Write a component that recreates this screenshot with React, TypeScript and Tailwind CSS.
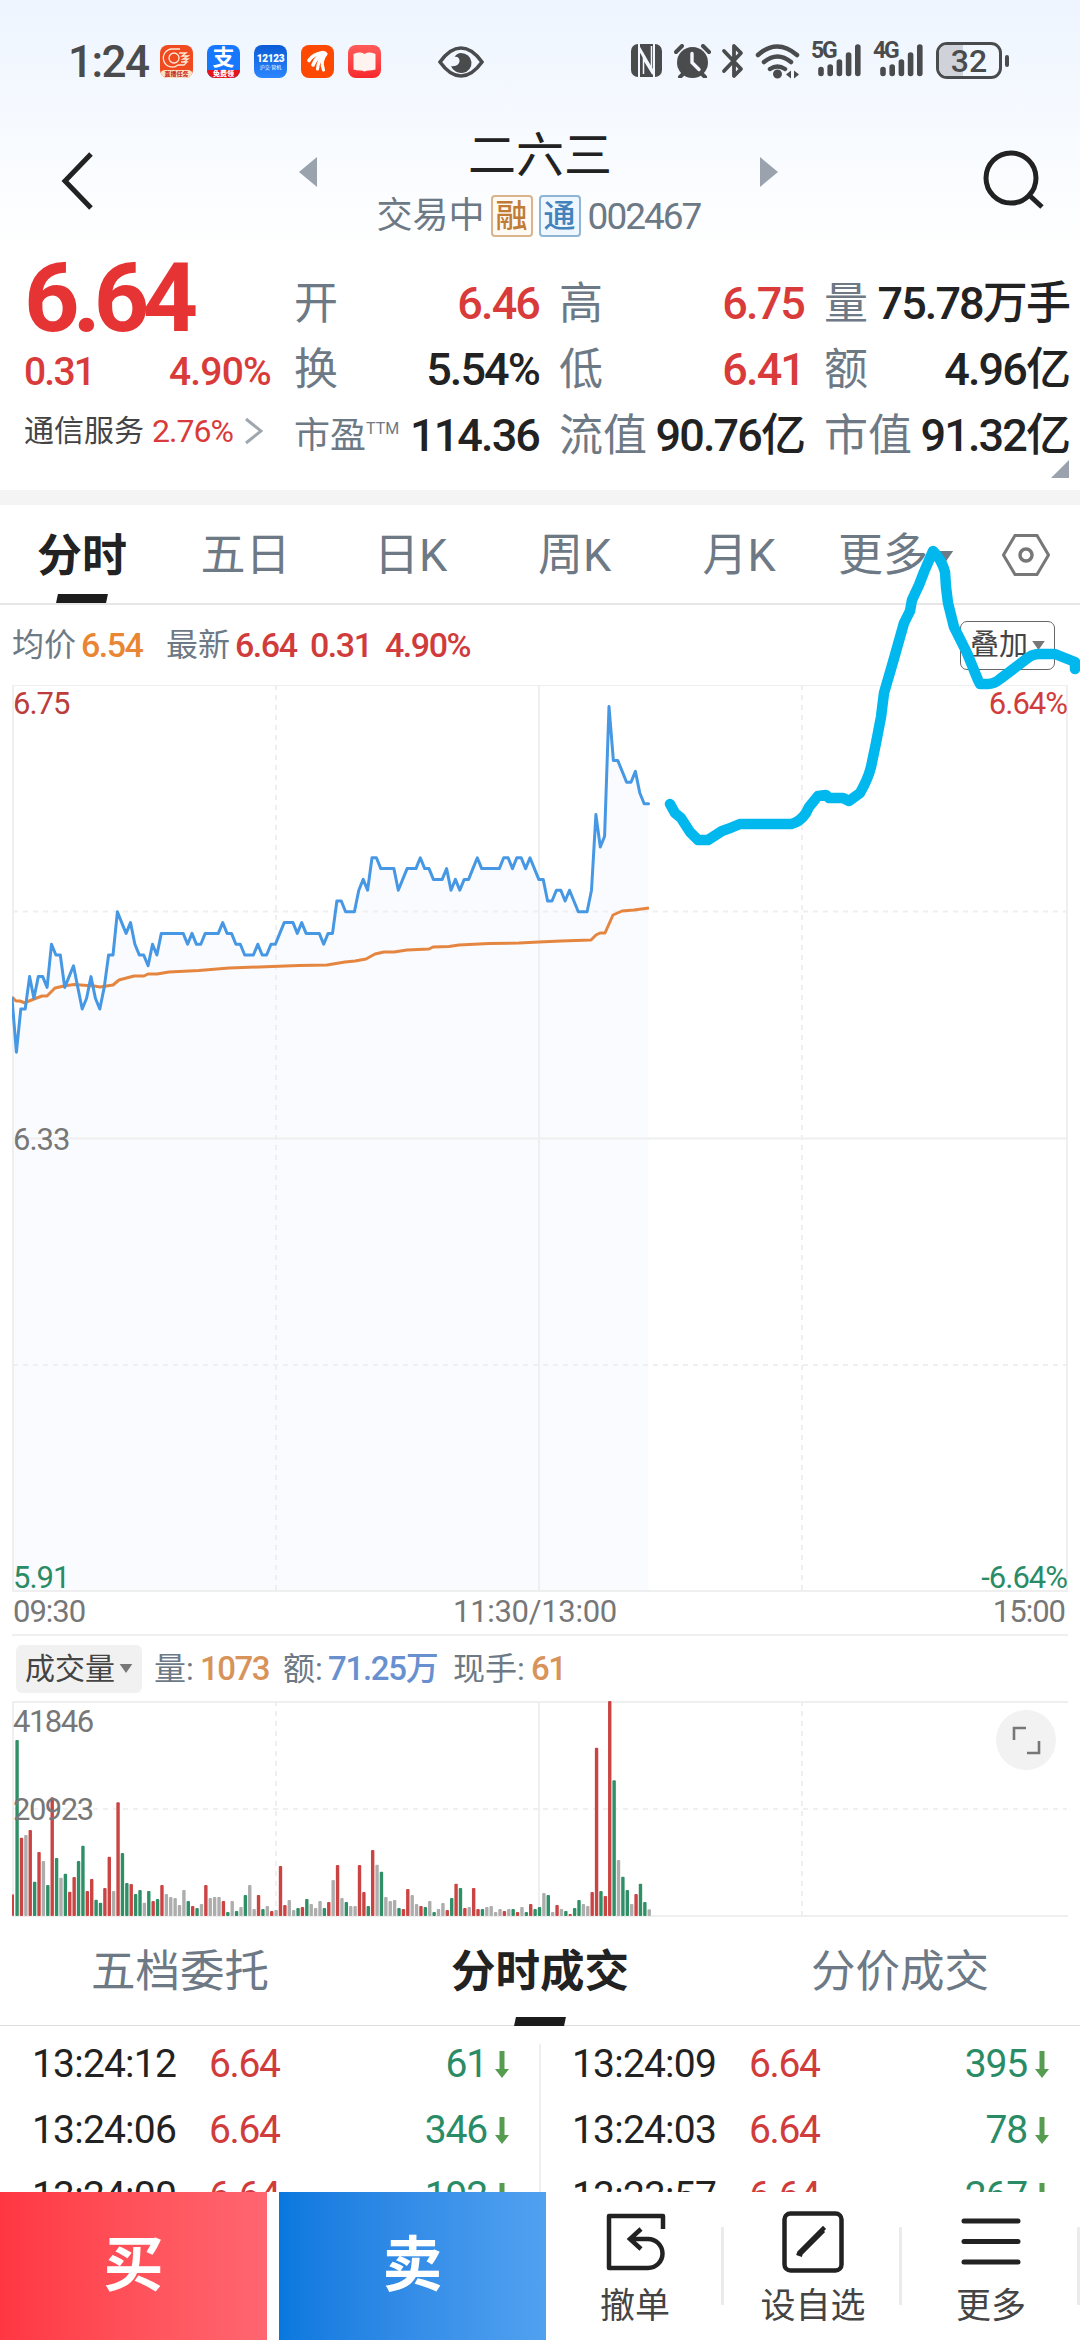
import React from "react";

const TOP_PRICE = 6.75;
const STEP = 4.39;

// one price per minute since 09:30, in cents
const prices = [
    646, 641, 645, 645, 648, 646, 648, 648, 647, 651, 650, 650, 647, 648, 649, 647, 645, 646, 648, 646,
    645, 647, 650, 650, 654, 653, 652, 653, 651, 650, 650, 649, 651, 650, 652, 652, 652, 652, 652, 652,
    651, 652, 651, 651, 652, 652, 652, 652, 653, 652, 652, 651, 651, 650, 650, 650, 651, 650, 650, 651,
    651, 652, 653, 653, 653, 652, 653, 652, 652, 652, 652, 651, 652, 652, 655, 655, 654, 654, 654, 656,
    657, 656, 659, 659, 658, 658, 658, 658, 656, 657, 658, 658, 658, 659, 658, 658, 657, 657, 657, 658,
    656, 657, 656, 657, 657, 658, 659, 658, 658, 658, 658, 658, 659, 659, 658, 659, 659, 658, 659, 658,
    657, 657, 655, 655, 656, 656, 655, 656, 655, 654, 654, 654, 656, 663, 660, 661, 673, 668, 668, 667,
    666, 666, 667, 665, 664, 664,
];

// r = up, g = down, n = flat; the number is the bar height in thirds of a pixel
const volumes =
    "r65 g528 r235 n243 r258 g103 r192 n165 g93 r356 g174 n115 g127 r73 r117 g165 g211 r75 r111 g49 " +
    "g40 r84 r178 n75 r341 g189 g99 r96 g66 g78 n40 g75 r45 g51 r93 n66 n57 n54 n33 n78 " +
    "g45 r30 g24 n36 r93 n54 n57 n57 r45 g12 n45 g15 n27 g63 n93 n21 r63 g21 n30 r15 " +
    "n18 r150 r33 n48 n18 g24 r27 g51 n36 n24 n45 g24 r42 n108 r153 n54 g42 n30 n30 r153 " +
    "r72 g30 r198 n154 g133 n57 n45 n48 g24 r21 r81 n63 n36 r30 g27 n45 g12 n21 n39 r18 " +
    "g54 r97 g84 r24 n27 r84 r21 g21 n27 n30 n12 n21 r15 n21 g21 r12 n27 g12 r36 g21 " +
    "g27 n69 g63 n12 r33 n21 g15 r6 g24 g48 n36 n30 r72 r505 g75 r60 r645 g407 n168 g118 " +
    "g78 n36 r66 g97 g42 n20";

const barColors: Record<string, string> = { r: "#cb4444", g: "#2f9067", n: "#adadad" };

const averageLine =
    "0,312 4,316 8,316 13,318 17,316 22,314 30,311 35,311 43,303 52,301 62,299.5 82,301 88,302 101,300 107,295 122,291 132,291 136,289 145,289 157,287 187,285.5 217,283 247,282 287,280.5 315,280 327,278 333,277 343,276 354,274 363,269 372,267 382,267 395,265 417,264 421,262 437,261.5 447,260 477,258.5 507,258 527,257 549,256 579,255 584,250 588,248 593,248 601,230 610,226 622,225 637,223";

const sketchLine =
    "M670 804L675 813L681 818L690 832L698 840L708 840L722 831Q731 828 740 824L791 824Q800 822 806 813L809 807L818 796L826 795L829 798L843 798L849 801L860 793Q868 779 871 767L876 743L881 717L884 693L893 662L904 623L910 611L912 600L919 585L924 572L933 551Q942 560 945 572L946 587L948 603L954 627L967 653L978 680L980 684L988 684Q994 684 1000 679L1012 670L1029 657Q1034 654 1039 654L1055 654L1075 662L1075 669";

const priceY = (p: number) => (TOP_PRICE - p / 100) * 1080;

const Caret = ({ className }: { className?: string }) => (
    <svg viewBox="0 0 14 10" className={className} fill="currentColor">
        <path d="M0 0h14L7 10z" />
    </svg>
);

const SignalBars = ({ label }: { label: string }) => (
    <div className="relative h-[36px] w-[51px]">
        <span className="absolute left-0 top-[-1px] text-[23px] font-bold leading-[18px] tracking-[-2.200px]">{label}</span>
        <svg viewBox="0 0 51 36" className="h-full w-full" stroke="currentColor" strokeWidth="5.6" strokeLinecap="round">
            <path d="M10 26.500v4M19.200 24v6.500M28.400 19v11.500M37.600 12v18.500M46.800 4v26.500" />
        </svg>
    </div>
);

const StatusBar = () => (
    <div className="relative flex h-[92px] items-start pt-[42px] pl-[68px] text-[#4a4b4d]">
        <span className="w-[92px] text-[44px] font-medium leading-[40px] tracking-[-1.500px]">1:24</span>
        <div className="flex gap-[14px] pt-[3px]">
            <div className="relative h-[33px] w-[33px] overflow-hidden rounded-[8px] bg-[#f04a20]">
                <svg viewBox="0 0 33 33" fill="none" stroke="#ffe9d8" strokeWidth="1.3">
                    <circle cx="14" cy="13" r="5" />
                    <path d="M20 4h-8a9 9 0 1 0 6 16h6l3-3h-6M19 8h7l-4 3h6l-5 3h5l-4 3" />
                </svg>
                <div className="absolute inset-x-0 bottom-0 h-[8px] rounded-t-[5px] bg-[#fbe3c0] text-center text-[6px] font-black leading-[8px] text-[#c33]">直播任务</div>
            </div>
            <div className="relative h-[33px] w-[33px] overflow-hidden rounded-[8px] bg-[#1677ff] text-center text-[22px] font-bold leading-[25px] text-white">
                支
                <div className="absolute inset-x-0 bottom-0 h-[8px] bg-[#e5141c] text-[7px] font-black leading-[8px]">免费领</div>
            </div>
            <div className="flex h-[33px] w-[33px] flex-col items-center justify-center rounded-[8px] bg-linear-to-b from-[#0a5cd6] to-[#2b86ff] text-white">
                <span className="text-[10px] font-black leading-[11px] tracking-[-0.300px]">12123</span>
                <span className="text-[5px] leading-[6px]">沪交·管机</span>
            </div>
            <div className="h-[33px] w-[33px] rounded-[8px] bg-[#ff4800]">
                <svg viewBox="0 0 33 33" fill="none" stroke="white" strokeLinecap="round">
                    <path d="M8 15.500Q12 9 22 7.500" strokeWidth="3.600" />
                    <path d="M12 20Q15 12 23.500 8" strokeWidth="3.600" />
                    <path d="M16.500 24Q17 15 24.500 8.500M22.500 25Q19 16 25 9" strokeWidth="3.200" />
                </svg>
            </div>
            <div className="h-[33px] w-[33px] rounded-[8px] bg-linear-to-b from-[#ff5a5a] to-[#f8262c]">
                <svg viewBox="0 0 33 33" fill="#fff3f0">
                    <path d="M5.500 9q3-2 7-1.500 2.500 0 4 1.500 1.500-1.500 4-1.500 4-.5 7 1.500v15.500q-3 1-7 1-2 0-4 1-2-1-4-1-4 0-7-1z" />
                </svg>
            </div>
        </div>
        <svg viewBox="0 0 46 32" className="ml-[57px] mt-[4px] h-[32px] w-[46px]">
            <path d="M2 16Q12 2 23 2t21 14Q34 30 23 30T2 16z" fill="none" stroke="currentColor" strokeWidth="3.600" />
            <path d="M23 7a10.500 10 0 1 1-10 13c5 1 9-2 8.500-6-.5-3-3-3.500-5-3q2.500-4 6.500-4z" fill="currentColor" />
        </svg>
        <div className="absolute left-[631px] top-[42px] flex h-[37px] items-center">
            <svg viewBox="0 0 31 33" className="h-[33px] w-[31px]">
                <rect width="31" height="33" rx="7" fill="currentColor" />
                <path d="M8 0v33M23 0v33" stroke="#f3f7fe" strokeWidth="2" />
                <path d="M8 1l15 26v6L8 7z" fill="#f3f7fe" />
                <path d="M12 14v15l8 3z" fill="currentColor" />
                <path d="M12.500 30V15l8 13V2" fill="none" stroke="#f3f7fe" strokeWidth="1.500" />
            </svg>
            <svg viewBox="0 0 37 34" className="ml-[12px] h-[34px] w-[37px]">
                <circle cx="18.500" cy="18.500" r="15.500" fill="currentColor" />
                <path d="M2 8l6-6M35 8l-6-6M9 30l-3 3M28 30l3 3" stroke="currentColor" strokeWidth="4" strokeLinecap="round" />
                <path d="M18 9.500v9l7 7" fill="none" stroke="#f2f6fe" strokeWidth="3.400" strokeLinecap="round" />
            </svg>
            <svg viewBox="0 0 24 36" className="ml-[10px] h-[36px] w-[24px]" fill="none" stroke="currentColor" strokeWidth="3.800" strokeLinejoin="round" strokeLinecap="round">
                <path d="M3 8l17 18-7 7V3l7 7L3 28" />
            </svg>
            <svg viewBox="0 0 46 36" className="ml-[10px] h-[36px] w-[46px]" fill="none" stroke="currentColor" strokeWidth="4.500" strokeLinecap="round">
                <path d="M3 12Q22 -5 42 12M9 19q13.500-11 27 0M15 26q7.500-5 15 0" />
                <circle cx="22.500" cy="31" r="2.500" fill="currentColor" strokeWidth="4" />
                <path d="M31 31.500l5-4v8zM44 31.500l-5-4v8z" fill="currentColor" stroke="none" />
            </svg>
            <div className="ml-[10px]">
                <SignalBars label="5G" />
            </div>
            <div className="ml-[11px]">
                <SignalBars label="4G" />
            </div>
            <div className="relative ml-[12px] h-[37px] w-[66px] overflow-hidden rounded-[11px] border-[3px] border-[#4a4b4d] text-center">
                <div className="absolute inset-y-0 left-0 w-[24px] bg-[#cfd2d8]" />
                <span className="relative text-[32px] font-medium leading-[32px]">32</span>
            </div>
            <div className="ml-[3px] h-[12px] w-[4px] rounded-[2px] bg-[#4a4b4d]" />
        </div>
    </div>
);

const Header = () => (
    <div className="flex h-[158px] items-start justify-between pl-[60px] pr-[35px] text-[#222]">
        <svg viewBox="0 0 34 60" className="mt-[59px] h-[60px] w-[34px]" fill="none" stroke="currentColor" strokeWidth="5">
            <path d="M31 3L5 30l26 27" />
        </svg>
        <div className="flex w-[480px] justify-between">
            <svg viewBox="0 0 18 30" className="mt-[65px] h-[30px] w-[18px]" fill="#9aa3ad">
                <path d="M18 0v30L0 15z" />
            </svg>
            <div className="flex flex-col items-center">
                <h1 className="mt-[36px] pl-[3px] text-[48px] leading-[56px]">二六三</h1>
                <div className="mt-[11px] flex h-[42px] items-center text-[#6d7985]">
                    <span className="text-[36px] leading-[44px]">交易中</span>
                    <span className="ml-[6px] h-[42px] w-[42px] rounded-[4px] border-2 border-[#d9b48c] bg-[#fffaf3] text-center text-[32px] font-medium leading-[38px] text-[#c07c35]">融</span>
                    <span className="ml-[6px] h-[42px] w-[42px] rounded-[4px] border-2 border-[#8fb4d4] bg-[#eef7ff] text-center text-[32px] font-medium leading-[38px] text-[#4482bb]">通</span>
                    <span className="ml-[7px] text-[37px] leading-[43px] tracking-[-2px]">002467</span>
                </div>
            </div>
            <svg viewBox="0 0 18 30" className="mt-[65px] h-[30px] w-[18px]" fill="#9aa3ad">
                <path d="M0 0v30l18-15z" />
            </svg>
        </div>
        <svg viewBox="0 0 62 60" className="mt-[57px] h-[60px] w-[62px]" fill="none" stroke="currentColor" strokeWidth="5">
            <circle cx="28" cy="29" r="25" />
            <path d="M46 46l13 12" />
        </svg>
    </div>
);

interface QuoteItem {
    label: string;
    sup?: string;
    value: string;
    up?: boolean;
}

const quoteItems: QuoteItem[] = [
    { label: "开", value: "6.46", up: true },
    { label: "高", value: "6.75", up: true },
    { label: "量", value: "75.78万手" },
    { label: "换", value: "5.54%" },
    { label: "低", value: "6.41", up: true },
    { label: "额", value: "4.96亿" },
    { label: "市盈", sup: "TTM", value: "114.36" },
    { label: "流值", value: "90.76亿" },
    { label: "市值", value: "91.32亿" },
];

const Quote = () => (
    <div className="relative flex h-[240px] pl-[24px]">
        <div className="w-[270px] shrink-0 text-[#d93b3b]">
            <div className="h-[96px] text-[97px] font-bold leading-[96px] tracking-[-7px] text-[#e63434]">6.64</div>
            <div className="mt-[6px] flex w-[247px] justify-between text-[39px] font-medium leading-[40px]">
                <span className="tracking-[-1.800px]">0.31</span>
                <span className="tracking-[-0.800px]">4.90%</span>
            </div>
            <div className="mt-[19px] flex h-[40px] items-center text-[30px] leading-[40px]">
                <span className="text-[#444]">通信服务</span>
                <span className="ml-[8px] text-[32px] tracking-[-1px]">2.76%</span>
                <svg viewBox="0 0 18 28" className="ml-[12px] h-[28px] w-[18px]" fill="none" stroke="#a0a7ae" strokeWidth="3">
                    <path d="M1 2l15 12L1 26" />
                </svg>
            </div>
        </div>
        <div className="grid h-[219px] grid-cols-[245px_245px_245px] grid-rows-[66px_66px_66px] gap-x-[20px] pt-[21px]">
            {quoteItems.map((item) => (
                <div key={item.label} className="flex items-center justify-between whitespace-nowrap leading-[66px]">
                    <span className={item.sup ? "flex text-[36px] text-[#6d7985]" : "text-[44px] text-[#6d7985]"}>
                        {item.label}
                        {item.sup && <sup className="top-0 text-[16px] leading-[52px]">{item.sup}</sup>}
                    </span>
                    <span className={`text-[45px] font-medium tracking-[-1.900px] ${item.up ? "text-[#d93b3b]" : "text-[#222]"}`}>
                        {item.value}
                    </span>
                </div>
            ))}
        </div>
        <svg viewBox="0 0 18 18" className="absolute left-[1051px] top-[210px] h-[18px] w-[18px]" fill="#9aa3ad">
            <path d="M18 0v18H0z" />
        </svg>
    </div>
);

const PeriodTabs = () => (
    <div className="relative flex h-[100px] items-center border-b-2 border-[#e6e6e6] text-[45px] leading-[100px] text-[#6d7985]">
        <div className="relative h-full w-[164px] pt-[2px] text-center font-bold text-[#222]">
            分时
            <div className="absolute bottom-0 left-[57px] h-[9px] w-[50px] -skew-x-12 bg-[#1c1c1c]" />
        </div>
        <div className="w-[163px] pt-[4px] text-center">五日</div>
        <div className="w-[167px] pt-[4px] text-center">日K</div>
        <div className="w-[161px] pt-[4px] text-center">周K</div>
        <div className="w-[168px] pt-[4px] text-center">月K</div>
        <div className="flex w-[150px] items-center pl-[15px] pt-[4px]">
            更多
            <Caret className="ml-[9px] h-[11px] w-[17px]" />
        </div>
        <svg viewBox="0 0 48 42" className="ml-[29px] mt-[2px] h-[42px] w-[48px]" fill="none" stroke="#777" strokeWidth="3">
            <path d="M13 1.500h22L46.500 21 35 40.500H13L1.500 21z" />
            <circle cx="24" cy="21" r="6" strokeWidth="3.500" />
        </svg>
    </div>
);

const PriceSummary = () => (
    <div className="flex h-[80px] items-center pl-[12px] text-[32px] leading-[48px] text-[#6d7985]">
        <span>均价</span>
        <span className="ml-[5px] w-[85px] text-[34px] font-medium tracking-[-1.500px] text-[#e88634]">6.54</span>
        <span>最新</span>
        <span className="ml-[5px] w-[75px] text-[34px] font-medium tracking-[-1.500px] text-[#d03c3c]">6.64</span>
        <span className="w-[75px] text-[34px] font-medium tracking-[-1.500px] text-[#d03c3c]">0.31</span>
        <span className="text-[34px] font-medium tracking-[-1.500px] text-[#d03c3c]">4.90%</span>
        <div className="ml-auto mr-[25px] flex h-[49px] w-[95px] items-center rounded-[7px] border border-[#666] pl-[9px] text-[29px] text-[#444]">
            叠加
            <Caret className="ml-[4px] h-[9px] w-[13px] text-[#777]" />
        </div>
    </div>
);

const PriceChart = () => {
    const line = prices.map((p, i) => `${(i * STEP).toFixed(1)},${priceY(p).toFixed(1)}`).join(" ");
    const lastX = ((prices.length - 1) * STEP).toFixed(1);

    return (
        <div className="relative mx-[12px] h-[907px] w-[1056px] text-[31px] leading-[36px] tracking-[-1px] text-[#777]">
            <svg viewBox="0 0 1056 907" className="block h-[907px] w-[1056px]" fill="none">
                <polygon points={`0,907 ${line} ${lastX},907`} fill="#fafbff" />
                <g stroke="#efefef" strokeWidth="2">
                    <rect x="1" y="0" width="1054" height="906" />
                    <path d="M1 453.500h1054M527 0v906" />
                    <path d="M264 0v906M790 0v906M1 226.500h1054M1 680h1054" strokeDasharray="5 5" />
                </g>
                <polyline points={averageLine} stroke="#e58640" strokeWidth="3" strokeLinejoin="round" />
                <polyline points={line} stroke="#4698e4" strokeWidth="3" strokeLinejoin="round" strokeLinecap="round" />
            </svg>
            <span className="absolute left-[1px] top-[1px] text-[#bd3c3c]">6.75</span>
            <span className="absolute right-[1px] top-[1px] text-[#d03c3c]">6.64%</span>
            <span className="absolute left-[1px] top-[437px]">6.33</span>
            <span className="absolute bottom-[-4px] left-[1px] text-[#2a8c66]">5.91</span>
            <span className="absolute bottom-[-4px] right-[1px] text-[#2a8c66]">-6.64%</span>
        </div>
    );
};

const VolumeChart = () => (
    <div className="relative mx-[12px] h-[217px] w-[1056px] text-[31px] leading-[36px] tracking-[-1.500px] text-[#777]">
        <svg viewBox="0 0 1056 217" className="block h-[217px] w-[1056px]" fill="none">
            <g stroke="#efefef" strokeWidth="2">
                <path d="M1 216V1H1056M527 0v215M1 215h1055" />
                <path d="M264 0v215M790 0v215M1 108h1054" strokeDasharray="5 5" />
            </g>
            {volumes.split(" ").map((bar, i) => {
                const h = Number(bar.slice(1)) / 3;
                return <rect key={i} x={Math.max(0, i * STEP - 1)} y={215 - h} width={i ? 3.4 : 2} height={h} rx="1" fill={barColors[bar[0]]} />;
            })}
        </svg>
        <span className="absolute left-[1px] top-[3px]">41846</span>
        <span className="absolute left-[1px] top-[91px]">20923</span>
        <div className="absolute left-[984px] top-[9px] h-[60px] w-[60px] rounded-full bg-[#f2f2f2]">
            <svg viewBox="0 0 60 60" fill="none" stroke="#777" strokeWidth="2.600">
                <path d="M18 30V18h12M31 43h12V31" />
            </svg>
        </div>
    </div>
);

const VolumeHeader = () => (
    <div className="mx-[12px] flex h-[67px] items-center border-t-2 border-[#efefef] pl-[4px] text-[32px] leading-[48px] text-[#6d7985]">
        <div className="mr-[12px] flex h-[48px] w-[126px] items-center rounded-[6px] bg-[#f1f1f1] pl-[9px] text-[30px] text-[#444]">
            成交量
            <Caret className="ml-[4px] h-[9px] w-[14px] text-[#777]" />
        </div>
        <span className="w-[46px]">量:</span>
        <span className="w-[83px] text-[33px] font-medium tracking-[-1.500px] text-[#d8935a]">1073</span>
        <span className="w-[45px]">额:</span>
        <span className="w-[125px] whitespace-nowrap text-[33px] font-medium tracking-[-1.300px] text-[#6890cf]">71.25万</span>
        <span className="w-[78px]">现手:</span>
        <span className="text-[33px] font-medium tracking-[-1.500px] text-[#d8935a]">61</span>
    </div>
);

const trades = [
    { time: "13:24:12", price: "6.64", lots: 61 },
    { time: "13:24:09", price: "6.64", lots: 395 },
    { time: "13:24:06", price: "6.64", lots: 346 },
    { time: "13:24:03", price: "6.64", lots: 78 },
    { time: "13:24:00", price: "6.64", lots: 192 },
    { time: "13:23:57", price: "6.64", lots: 267 },
];

const TradeList = () => (
    <div className="relative grid h-[166px] grid-cols-2 content-start overflow-hidden pt-[5px] text-[39px] leading-[66px] tracking-[-0.800px]">
        {trades.map((t) => (
            <div key={t.time} className="flex h-[66px] items-center pl-[32px] pr-[31px]">
                <span className="w-[177px] text-[#222]">{t.time}</span>
                <span className="tracking-[-1.400px] text-[#d03c3c]">{t.price}</span>
                <span className="ml-auto tracking-[-1.200px] text-[#2a8c66]">{t.lots}</span>
                <svg viewBox="0 0 14 27" className="ml-[8px] h-[27px] w-[14px]" fill="#559c50">
                    <path d="M4.500 0h5v18H14L7 27 0 18h4.500z" />
                </svg>
            </div>
        ))}
        <div className="absolute left-[539px] top-[18px] h-[148px] w-[2px] bg-[#efefef]" />
    </div>
);

const ActionBar = () => (
    <div className="flex h-[148px] bg-white text-[#222]">
        <button className="h-full w-[267px] bg-linear-to-r from-[#ff3642] to-[#ff6670] text-[60px] font-bold leading-[60px] text-white">买</button>
        <button className="ml-[12px] h-full w-[267px] bg-linear-to-r from-[#0878de] to-[#51a1f0] text-[60px] font-bold leading-[60px] text-white">卖</button>
        <div className="flex w-[534px] text-[35px] leading-[44px] text-[#444]">
            <div className="relative flex w-[178px] flex-col items-center pt-[19px]">
                <svg viewBox="0 0 62 62" className="h-[62px] w-[62px]" fill="none" stroke="#222" strokeWidth="4.500">
                    <path d="M59 18V5H5v52h39a14.500 14.500 0 0 0 0-29H28" strokeLinejoin="round" />
                    <path d="M37 18L26 28l11 10" />
                </svg>
                <span className="mt-[12px]">撤单</span>
                <div className="absolute right-0 top-[35px] h-[78px] w-[3px] bg-[#ebebeb]" />
            </div>
            <div className="relative flex w-[178px] flex-col items-center pt-[19px]">
                <svg viewBox="0 0 62 62" className="h-[62px] w-[62px]" fill="none" stroke="#222" strokeWidth="4.500">
                    <rect x="2.500" y="2.500" width="57" height="57" rx="6" />
                    <path d="M17 45l1-3L41 19l1 1" strokeWidth="6" />
                </svg>
                <span className="mt-[12px]">设自选</span>
                <div className="absolute right-0 top-[35px] h-[78px] w-[3px] bg-[#ebebeb]" />
            </div>
            <div className="relative flex w-[178px] flex-col items-center pt-[19px]">
                <svg viewBox="0 0 62 62" className="h-[62px] w-[62px]" stroke="#222" strokeWidth="5" strokeLinecap="round">
                    <path d="M4 10h54M4 30.500h54M4 51h54" />
                </svg>
                <span className="mt-[12px]">更多</span>
                <div className="absolute right-0 top-[35px] h-[78px] w-[3px] bg-[#ebebeb]" />
            </div>
        </div>
    </div>
);

const App = () => {
    return (
        <div className="relative h-[2340px] w-[1080px] overflow-hidden bg-white font-['Roboto','Noto_Sans_CJK_SC',sans-serif]">
            <div className="bg-linear-to-b from-[#eef5ff] to-white">
                <StatusBar />
                <Header />
            </div>
            <Quote />
            <div className="h-[15px] bg-[#f4f4f4]" />
            <PeriodTabs />
            <PriceSummary />
            <PriceChart />
            <div className="mx-[12px] grid h-[42px] grid-cols-3 text-[31px] leading-[39px] tracking-[-1px] text-[#777]">
                <span className="pl-[1px]">09:30</span>
                <span className="pr-[10px] text-center tracking-[-0.300px]">11:30/13:00</span>
                <span className="pr-[3px] text-right">15:00</span>
            </div>
            <VolumeHeader />
            <VolumeChart />
            <div className="grid h-[108px] grid-cols-3 border-b border-[#dedede] text-center text-[44.500px] leading-[108px] text-[#6d7985]">
                <div>五档委托</div>
                <div className="relative font-bold text-[#222]">
                    分时成交
                    <div className="absolute bottom-0 left-[155px] h-[9px] w-[50px] -skew-x-12 bg-[#1c1c1c]" />
                </div>
                <div>分价成交</div>
            </div>
            <TradeList />
            <ActionBar />
            {/* hand drawn forecast */}
            <svg viewBox="0 0 1080 2340" className="pointer-events-none absolute inset-0 h-full w-full" fill="none">
                <path d={sketchLine} stroke="#00b7ee" strokeWidth="10.500" strokeLinecap="round" strokeLinejoin="round" />
            </svg>
        </div>
    );
};

export default App;
